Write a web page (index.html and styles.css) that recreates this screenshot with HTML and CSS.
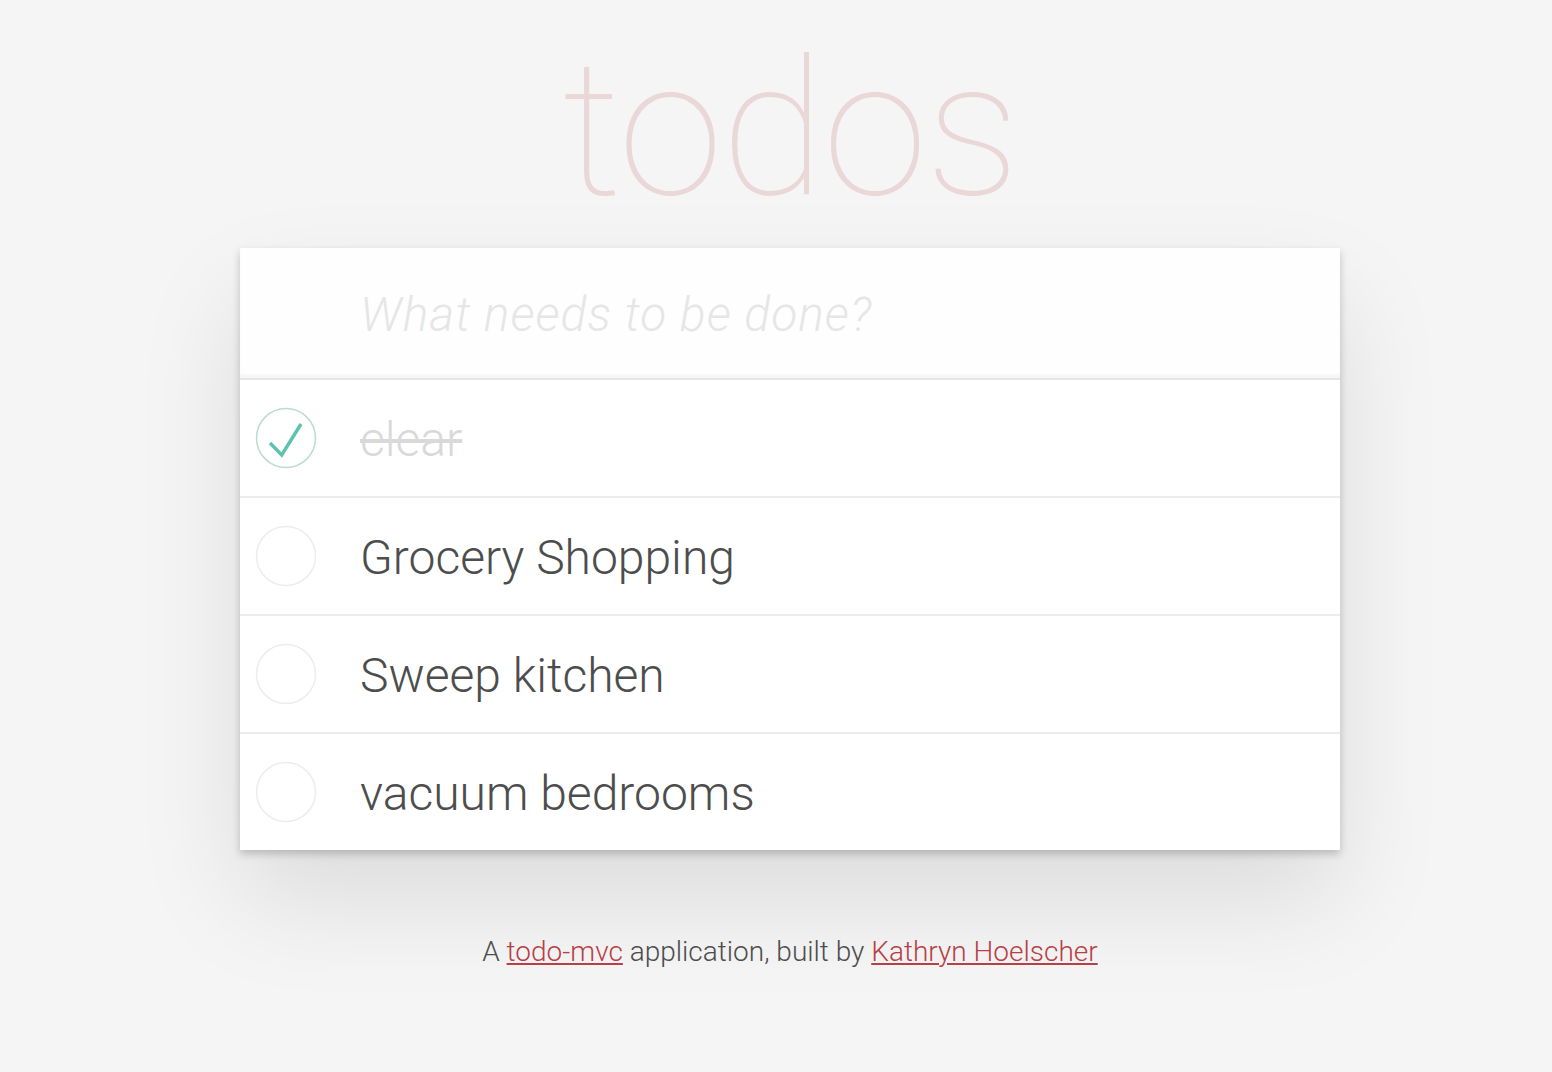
FILE: index.html
```html
<!DOCTYPE html>
<html lang="en">
<head>
<meta charset="utf-8">
<title>todos</title>
<link rel="stylesheet" href="styles.css">
</head>
<body>
<div class="page">
  <h1 class="title">todos</h1>
  <section class="todoapp">
    <div class="new-todo">
      <input class="new-todo-input" placeholder="What needs to be done?">
    </div>
    <ul class="todo-list">
      <li class="todo completed">
        <svg class="toggle" width="64" height="64" viewBox="0 0 64 64"><circle cx="32" cy="32" r="29.5" fill="none" stroke="#bddad5" stroke-width="1.5"/><polyline points="16,37 27.7,49 47,18" fill="none" stroke="#5dc2af" stroke-width="3.4"/></svg>
        <span class="label">clear</span>
      </li>
      <li class="todo">
        <svg class="toggle" width="64" height="64" viewBox="0 0 64 64"><circle cx="32" cy="32" r="29.5" fill="none" stroke="#ededed" stroke-width="1.5"/></svg>
        <span class="label">Grocery Shopping</span>
      </li>
      <li class="todo">
        <svg class="toggle" width="64" height="64" viewBox="0 0 64 64"><circle cx="32" cy="32" r="29.5" fill="none" stroke="#ededed" stroke-width="1.5"/></svg>
        <span class="label">Sweep kitchen</span>
      </li>
      <li class="todo">
        <svg class="toggle" width="64" height="64" viewBox="0 0 64 64"><circle cx="32" cy="32" r="29.5" fill="none" stroke="#ededed" stroke-width="1.5"/></svg>
        <span class="label">vacuum bedrooms</span>
      </li>
    </ul>
  </section>
  <footer class="info">A <a href="#">todo-mvc</a> application, built by <a href="#">Kathryn Hoelscher</a></footer>
</div>
</body>
</html>
```
FILE: styles.css
```css
html, body {
  margin: 0;
  padding: 0;
}
body {
  background: #f5f5f5;
  color: #4d4d4d;
  font-family: "Helvetica Neue", Roboto, "Liberation Sans", Arial, sans-serif;
  font-weight: 300;
  padding-left: 28px;
  min-height: 1072px;
  box-sizing: border-box;
}
.page {
  width: 1100px;
  margin: 0 auto;
  padding-top: 34px;
}
.title {
  margin: 0 0 24px;
  height: 190px;
  font-size: 190px;
  line-height: 190px;
  font-weight: 100;
  text-align: center;
  color: rgba(175, 47, 47, 0.15);
  letter-spacing: -2px;
}
.todoapp {
  background: #fff;
  box-shadow: 0 4px 8px 0 rgba(0, 0, 0, 0.2), 0 50px 100px 0 rgba(0, 0, 0, 0.1);
}
.new-todo {
  height: 132px;
  box-sizing: border-box;
  padding-left: 120px;
  display: flex;
  align-items: center;
  background: rgba(0, 0, 0, 0.003);
  box-shadow: inset 0 -4px 2px rgba(0, 0, 0, 0.03);
  border-bottom: 2px solid #e6e6e6;
}
.new-todo-input {
  border: none;
  outline: none;
  background: transparent;
  width: 100%;
  font-family: inherit;
  font-size: 48px;
  font-weight: 300;
  color: #4d4d4d;
  padding: 0;
  margin-top: 2px;
}
.new-todo-input::placeholder {
  font-style: italic;
  color: #e6e6e6;
  font-weight: 300;
  letter-spacing: 1px;
}
.todo-list {
  list-style: none;
  margin: 0;
  padding: 0;
}
.todo {
  height: 118px;
  box-sizing: border-box;
  border-bottom: 2px solid #ededed;
  display: flex;
  align-items: center;
  font-size: 48px;
}
.todo:last-child {
  border-bottom: none;
  height: 116px;
}
.toggle {
  flex: none;
  margin-left: 14px;
  margin-right: 42px;
}
.label {
  line-height: 1.2;
  color: #4d4d4d;
  padding-top: 3px;
}
.completed .label {
  color: #d9d9d9;
  text-decoration: line-through;
}
.info {
  margin-top: 82px;
  text-align: center;
  font-size: 28px;
  line-height: 40px;
  color: #4d4d4d;
}
.info a {
  color: #b83f45;
  text-decoration: underline;
}
```
